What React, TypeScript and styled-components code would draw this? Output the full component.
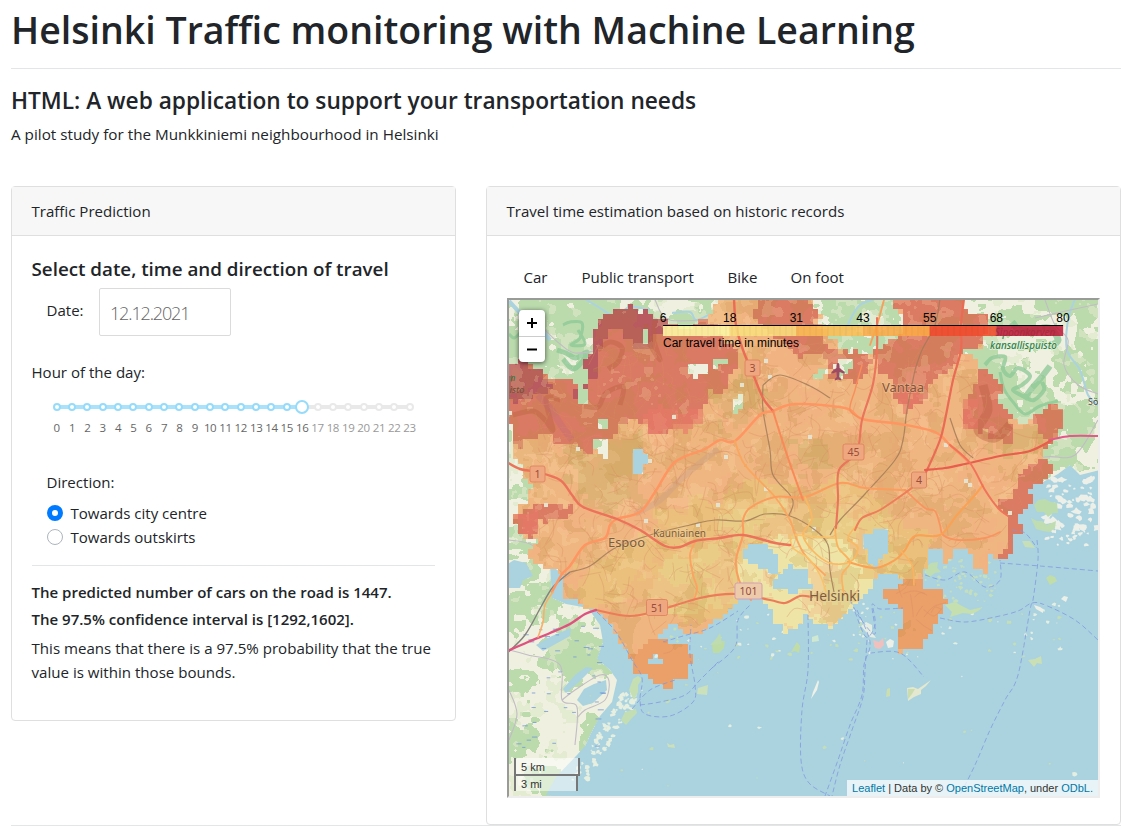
import React from "react";
import styled, { createGlobalStyle } from "styled-components";

const GlobalStyle = createGlobalStyle`
  * { box-sizing: border-box; }
  body { margin: 0; background: #fff; color: #212529; font-family: "Open Sans", "Noto Sans", sans-serif; font-size: 15.05px; overflow: hidden; }
  h1, h2, h3, p { margin: 0; }
`;

const Page = styled.main`
  padding: 6px 2px 0 11px;
  height: 826px;
  overflow: hidden;
`;
const Title = styled.h1`
  font-size: 37.5px;
  line-height: 48px;
  font-weight: 600;
  white-space: nowrap;
`;
const Rule = styled.hr<{ $top?: number; $bottom?: number }>`
  border: 0;
  height: 1px;
  background: #e4e5e6;
  margin: ${(p) => p.$top ?? 0}px 0 ${(p) => p.$bottom ?? 0}px;
`;
const Subtitle = styled.h2`
  font-size: 22.7px;
  line-height: 29px;
  font-weight: 600;
  white-space: nowrap;
`;
const Lead = styled.p`
  margin: 7px 0 40px;
  line-height: 24px;
  font-size: 15.25px;
`;
const Columns = styled.div`
  display: flex;
  gap: 30px;
  align-items: flex-start;
`;
const Card = styled.section<{ $width: number; $height: number }>`
  width: ${(p) => p.$width}px;
  height: ${(p) => p.$height}px;
  border: 1px solid #dfdfdf;
  border-radius: 4px;
`;
const CardHeader = styled.header`
  height: 49px;
  padding: 0 19.5px;
  line-height: 49px;
  background: #f7f7f7;
  border-bottom: 1px solid #dfdfdf;
`;
const PredictionBody = styled.div`
  padding: 21px 20px 21px 19.5px;
`;
const FormTitle = styled.h3`
  font-size: 18.8px;
  font-weight: 600;
  line-height: 24px;
  white-space: nowrap;
`;
const DateRow = styled.div`
  display: flex;
  height: 48px;
  margin-top: 7px;
  padding-left: 15px;
`;
const DateLabel = styled.label`
  width: 52.5px;
  line-height: 45px;
`;
const DateInput = styled.div`
  width: 132px;
  height: 48px;
  border: 1px solid #dbdbdb;
  border-radius: 2px;
  padding: 0 10px;
  font-size: 18px;
  font-weight: 300;
  line-height: 48px;
  color: #646464;
  letter-spacing: -1.15px;
`;
const HourLabel = styled.p`
  margin-top: 24px;
  line-height: 24px;
`;
const Slider = styled.div`
  display: grid;
  grid-template-columns: repeat(24, 15.35px);
  margin: 15px 0 0 17.5px;
`;
const Stop = styled.div<{ $on: boolean; $line: "on" | "off" | "none" }>`
  display: flex;
  flex-direction: column;
  align-items: center;
  position: relative;
  color: ${(p) => (p.$on ? "#666" : "#999")};
  &::before {
    content: "";
    position: absolute;
    display: ${(p) => (p.$line === "none" ? "none" : "block")};
    top: 6px;
    left: 50%;
    width: 100%;
    height: 4px;
    background: ${(p) => (p.$line === "on" ? "#abe2fb" : "#e9e9e9")};
  }
`;
const DotBox = styled.div`
  height: 16px;
  display: flex;
  align-items: center;
  z-index: 1;
`;
const Dot = styled.span<{ $on: boolean; $handle: boolean }>`
  width: ${(p) => (p.$handle ? 14 : 8)}px;
  height: ${(p) => (p.$handle ? 14 : 8)}px;
  border-radius: 50%;
  border: 2px solid ${(p) => (p.$on ? "#96dbfa" : "#e9e9e9")};
  background: #fff;
`;
const Mark = styled.span`
  font-size: 11.5px;
  line-height: 18px;
  margin-top: 4px;
  letter-spacing: -0.35px;
`;
const DirectionLabel = styled.p`
  margin: 33px 0 7px 15px;
  line-height: 24px;
`;
const RadioRow = styled.label`
  display: flex;
  align-items: center;
  gap: 8px;
  height: 24px;
  padding-left: 15px;
`;
const RadioMark = styled.span<{ $checked?: boolean }>`
  width: 16px;
  height: 16px;
  border-radius: 50%;
  border: ${(p) => (p.$checked ? "5px solid #007bff" : "1px solid #adb5bd")};
  background: #fff;
`;
const ResultLine = styled.p`
  font-weight: 600;
  font-size: 15.02px;
  line-height: 19px;
  margin-bottom: 8px;
  white-space: nowrap;
`;
const Explanation = styled.p`
  line-height: 24px;
  margin-top: -1px;
  font-size: 15.1px;
  white-space: nowrap;
`;
const MapBody = styled.div`
  padding: 29px 20px 0;
`;
const Tabs = styled.nav`
  display: flex;
  gap: 34px;
  padding-left: 16.5px;
  height: 33px;
  line-height: 24px;
`;
const Tab = styled.span<{ $width: number }>`
  width: ${(p) => p.$width}px;
  white-space: nowrap;
`;
const MapFrame = styled.div`
  position: relative;
  width: 593px;
  height: 500px;
  border: 2px solid;
  border-color: #999b99 #ededed #ededed #999b99;
  overflow: hidden;
  font-family: "Liberation Sans", Arial, sans-serif;
`;
const MapSvg = styled.svg`
  display: block;
`;
const ZoomControl = styled.div`
  position: absolute;
  top: 10px;
  left: 10px;
  width: 26px;
  border-radius: 4px;
  background: #fff;
  box-shadow: 0 1px 5px rgba(0, 0, 0, 0.65);
`;
const ZoomButton = styled.div`
  height: 26px;
  display: flex;
  align-items: center;
  justify-content: center;
  & + & { border-top: 1px solid #ccc; }
`;
const Scale = styled.div`
  position: absolute;
  left: 5px;
  bottom: 5px;
`;
const ScaleLine = styled.div<{ $width: number; $below?: boolean }>`
  width: ${(p) => p.$width}px;
  line-height: ${(p) => (p.$below ? 17 : 19)}px;
  padding-left: 5px;
  font-size: 11px;
  color: #333;
  border: 2px solid #777;
  border-top: ${(p) => (p.$below ? "2px solid #777" : "none")};
  border-bottom: ${(p) => (p.$below ? "none" : "2px solid #777")};
  margin-top: ${(p) => (p.$below ? -2 : 0)}px;
  height: ${(p) => (p.$below ? 17 : 18)}px;
  background: rgba(255, 255, 255, 0.5);
`;
const Attribution = styled.div`
  position: absolute;
  right: 0;
  bottom: 0;
  height: 16px;
  line-height: 16px;
  padding: 0 5px;
  font-size: 11px;
  color: #333;
  background: rgba(255, 255, 255, 0.72);
  white-space: nowrap;
`;
const MapLink = styled.span`
  color: #0078a8;
`;

type Pt = [number, number];
const parse = (s: string): Pt[] => s.trim().split(/\s+/).map((p) => p.split(",").map(Number) as Pt);
const inside = (x: number, y: number, poly: Pt[]) => {
  let hit = false;
  for (let i = 0, j = poly.length - 1; i < poly.length; j = i++) {
    const [xi, yi] = poly[i];
    const [xj, yj] = poly[j];
    if (yi > y !== yj > y && x < ((xj - xi) * (y - yi)) / (yj - yi) + xi) hit = !hit;
  }
  return hit;
};
const hash = (x: number, y: number, seed: number) => {
  const v = Math.sin(x * 127.1 + y * 311.7 + seed * 74.7) * 43758.5453;
  return v - Math.floor(v);
};
const noise = (x: number, y: number, seed: number) => {
  const xi = Math.floor(x), yi = Math.floor(y);
  const fx = x - xi, fy = y - yi;
  const u = fx * fx * (3 - 2 * fx), v = fy * fy * (3 - 2 * fy);
  const a = hash(xi, yi, seed), b = hash(xi + 1, yi, seed);
  const c = hash(xi, yi + 1, seed), d = hash(xi + 1, yi + 1, seed);
  return a + (b - a) * u + (c - a) * v + (a - b - c + d) * u * v;
};
// Merges matching cells of every row into one run.
const cells = (step: number, test: (x: number, y: number) => boolean) => {
  let d = "";
  for (let y = 299; y < 797; y += step) {
    let start = -1;
    for (let x = 508; x < 1100 + step; x += step) {
      const on = x < 1100 && test(x + step / 2, y + step / 2);
      if (on && start < 0) start = x;
      if (!on && start >= 0) {
        d += `M${start} ${y}H${x}v${step}H${start}z`;
        start = -1;
      }
    }
  }
  return d;
};
const grid = (polys: Pt[][], holes: Pt[][] = [], rough = 5) =>
  cells(5, (x, y) => {
    const px = x + (noise(x / 9, y / 9, 5) - 0.5) * rough * 2;
    const py = y + (noise(x / 9, y / 9, 8) - 0.5) * rough * 2;
    return polys.some((p) => inside(px, py, p)) && !holes.some((p) => inside(x, y, p));
  });

const AREA = parse(`505,362 528,363 538,370 550,376 565,380 578,388 590,383 587,365 590,350 592,335 597,320 605,314 625,308 645,310 660,318 672,328 690,330 702,322 715,312 722,295 808,295 822,318 828,332 838,348 850,353 870,352 890,342 905,331 898,318 890,295 962,295 965,312 990,313 985,347 962,350 975,362 988,370 1003,383 995,398 1010,412 1023,424 1045,410 1062,403 1062,420 1058,440 1046,450 1052,470 1045,482 1030,485 1027,494 1037,497 1020,510 1012,516 1025,525 1010,540 1014,552 1008,563 998,556 987,552 990,572 973,564 970,553 955,548 945,564 940,558 948,546 930,552 924,565 924,592 900,575 885,572 872,590 864,598 850,604 845,615 830,628 818,622 804,612 800,631 784,630 776,616 765,602 752,598 735,606 720,618 710,624 700,630 684,633 670,624 655,638 668,643 680,642 692,657 687,673 667,690 647,677 635,672 634,660 625,648 608,622 597,611 580,607 567,597 561,580 553,572 541,567 530,556 536,542 521,537 512,523 518,508 528,504 527,480 514,455 512,423 505,402`);
const ISLAND = parse(`881,580 900,586 908,580 925,580 925,589 943,590 948,604 937,622 932,634 925,646 897,649 897,632 905,622 900,608 885,608`);
const HOLES = [
  parse(`743,548 757,542 770,548 781,560 776,573 760,569 745,560`),
  parse(`774,578 790,565 808,570 811,589 790,593 774,587`),
  parse(`865,535 875,529 889,532 885,555 875,568 866,562`),
  parse(`869,582 888,577 892,588 875,596`),
  parse(`632,453 643,448 647,461 638,476 632,475`),
  parse(`590,440 607,437 609,461 598,455`),
  parse(`685,368 697,363 706,364 706,373 692,378`),
  parse(`714,360 727,357 727,364 714,367`),
  parse(`648,658 657,655 663,659 661,664 648,663`),
  parse(`732,398 741,395 742,411 733,412`),
  parse(`835,362 846,357 857,365 846,375 836,378`),
  parse(`812,375 825,367 828,373 818,382`),
  parse(`580,390 588,390 588,403 579,405`),
  parse(`600,417 606,417 606,429 600,429`),
  parse(`645,327 650,327 650,344 645,344`),
];
const RED = [
  parse(`500,355 580,378 592,300 670,310 700,326 714,318 720,338 734,349 738,370 729,385 712,397 704,408 692,423 678,418 668,428 652,435 642,433 644,422 620,423 618,436 602,445 580,451 564,440 541,436 524,444 505,452`),
  parse(`755,295 810,295 826,340 835,354 800,355 777,345 765,330 757,317`),
  parse(`870,350 905,330 890,295 967,295 966,312 992,312 985,347 962,350 950,372 937,372 930,395 917,405 897,398 890,375 875,367`),
  parse(`976,358 1005,380 998,400 1015,425 1008,440 992,443 983,432 967,435 960,420 970,401 974,383`),
  parse(`1030,415 1065,401 1064,440 1046,450 1040,438`),
  parse(`1030,462 1056,460 1049,481 1028,488 1039,499 1018,515 1026,529 1012,540 1015,554 1008,566 1000,555 1010,535 1006,519 996,507 1010,493 1018,477`),
  parse(`512,528 521,508 535,504 550,505 571,503 571,515 550,520 541,527 529,540 516,536`),
  parse(`825,350 867,352 870,378 845,382 830,371`),
];
const DARK = [
  parse(`592,325 604,312 645,306 665,318 672,329 654,334 653,349 638,349 625,331 612,331 600,350 597,375 580,380 584,362`),
  parse(`500,358 535,366 550,380 547,396 522,402 505,397`),
  parse(`564,375 586,381 589,400 577,397`),
];
const OCHRE = [parse(`560,440 590,455 620,440 640,440 640,500 610,510 580,495 565,470`), parse(`735,385 758,378 757,400 735,425 722,418 715,400`), parse(`800,440 832,436 838,462 800,468`), parse(`985,430 1040,420 1042,450 1000,455 980,445`)];
const WARM_YELLOW = [parse(`570,600 585,560 610,555 640,535 660,515 690,500 730,495 750,480 800,490 840,475 880,500 900,520 935,545 920,590 880,590 830,630 780,635 720,620 670,612 620,600 600,612`)];
const YELLOW = [parse(`650,580 670,560 700,548 722,536 730,515 750,503 795,505 840,500 860,518 875,515 905,560 910,580 860,610 830,632 780,635 765,602 720,610 695,604 670,612 650,600`)];
const CORE = [parse(`735,560 780,540 830,540 855,548 862,570 880,590 860,605 830,632 780,635 764,604 748,591`)];
const SEA = parse(`1100,470 1080,475 1070,465 1058,474 1043,482 1020,478 990,530 950,530 850,560 780,580 700,600 630,620 550,565 552,598 566,604 588,608 600,625 603,642 597,659 610,670 617,680 612,702 600,716 590,735 581,756 575,774 560,800 1100,800`);
const W_LAKES = [
  parse(`505,566 514,560 526,563 533,576 523,580 520,588 505,588`),
  parse(`536,645 552,636 571,628 570,636 543,651`),
  parse(`563,689 575,675 586,667 593,668 579,682 566,693`),
  parse(`577,700 584,689 594,684 606,680 607,690 593,703 583,706`),
  parse(`546,795 556,777 577,755 595,735 602,742 574,786 564,798`),
];

const areaD = grid([AREA, ISLAND], HOLES, 4);
const inArea = (x: number, y: number) => (inside(x, y, AREA) || inside(x, y, ISLAND)) && !HOLES.some((h) => inside(x, y, h));
const redD = grid(RED, [], 6);
const darkD = grid(DARK, [], 6);
const ochreD = grid(OCHRE, [], 12);
const warmD = grid(WARM_YELLOW, [], 10);
const yellowD = grid(YELLOW, [], 9);
const coreD = grid(CORE, [], 8);
const forestD = cells(1, (x, y) => !inside(x, y, SEA) && noise(x / 19, y / 19, 3) + noise(x / 6, y / 6, 4) * 0.5 + noise(x / 2.5, y / 2.5, 6) * 0.12 > (x > 620 && y < 480 ? 0.7 : y < 400 ? 0.5 : 0.87));
const paleD = cells(1, (x, y) => !inside(x, y, SEA) && noise(x / 12, y / 12, 13) + noise(x / 4, y / 4, 14) * 0.5 > 0.98);
const mottledD = cells(1, (x, y) => inArea(x, y) && noise(x / 17, y / 17, 21) + noise(x / 5, y / 5, 22) * 0.45 > (y < 470 ? 0.78 : 0.88));
const rosyD = cells(3, (x, y) => inArea(x, y) && noise(x / 22, y / 22, 31) + noise(x / 5, y / 5, 32) * 0.4 > 0.85);

const curve = (s: string) => {
  const p = parse(s);
  let d = `M${p[0]}`;
  for (let i = 0; i < p.length - 1; i++) {
    const a = p[i - 1] ?? p[i], b = p[i], c = p[i + 1], e = p[i + 2] ?? c;
    d += `C${b[0] + (c[0] - a[0]) / 6},${b[1] + (c[1] - a[1]) / 6} ${c[0] - (e[0] - b[0]) / 6},${c[1] - (e[1] - b[1]) / 6} ${c[0]},${c[1]}`;
  }
  return d;
};

const ROADS: { pts: string; c: string; w: number }[] = [
  { pts: `552,592 562,574 570,566 585,545 605,538 610,525 617,519 640,512 655,492 675,462 705,449 720,440 735,441 760,415 773,411 795,404 845,408 862,419 900,424 935,432 950,445 970,463`, c: "#ff9561", w: 2.4 },
  { pts: `862,419 850,410 855,390 862,365`, c: "#f88f5b", w: 1.4 },
  { pts: `735,441 745,465 775,497 790,520 795,535 805,555 825,575`, c: "#fba65f", w: 1.8 },
  { pts: `751,600 739,580 736,560 743,535 743,520 750,508 775,497 805,497 840,483 865,488 905,490`, c: "#fb9d5e", w: 2 },
  { pts: `905,490 925,508 935,511 940,525 943,535 958,540 985,538 1000,532`, c: "#f9945f", w: 1.8 },
  { pts: `848,562 875,568 895,560 905,550 915,536 940,535 957,515 975,495 983,485`, c: "#fba154", w: 2 },
  { pts: `695,542 690,555 693,575 697,588 694,600`, c: "#fda262", w: 1.8 },
  { pts: `805,497 812,519 803,534 812,550 830,563 850,562 858,548 848,538 858,524`, c: "#fbb862", w: 1.7 },
  { pts: `835,528 838,547 850,562 842,575 844,595`, c: "#fbb25f", w: 1.8 },
  { pts: `790,535 793,548 808,558 820,575 826,592`, c: "#fac169", w: 1.5 },
  { pts: `795,535 835,538`, c: "#fac169", w: 1.5 },
  { pts: `900,550 912,565 914,585`, c: "#fbb261", w: 1.5 },
  { pts: `870,345 877,325 884,300`, c: "#f99f5c", w: 1.8 },
  { pts: `734,299 736,325 743,350 753,374 763,398 773,411`, c: "#ec6b55", w: 2.4 },
  { pts: `773,411 787,455 803,500`, c: "#f98a58", w: 2 },
  { pts: `877,318 877,350 873,384 862,420 857,452 839,470 838,500 836,528`, c: "#ea755a", w: 2.1 },
  { pts: `964,299 961,325 961,350 953,380 945,420 940,440 928,468 922,480`, c: "#ea6b54", w: 2.2 },
  { pts: `922,480 905,493 880,510 862,518 855,530`, c: "#ee7d59", w: 2 },
  { pts: `925,470 945,468 965,464 1000,456 1030,451 1052,440`, c: "#e85d4b", w: 2.2 },
  { pts: `1050,440 1070,436 1100,436`, c: "#e4588a", w: 2 },
  { pts: `505,461 520,469 537,472 560,480 572,495 583,507 617,519 640,530 665,546 680,547 695,541 720,538 743,535 775,543 790,545`, c: "#ec735a", w: 2.4 },
  { pts: `950,445 970,463 985,490 998,508 1008,516`, c: "#f0735a", w: 2 },
  { pts: `596,610 630,616 660,610 700,598 735,594 770,600 785,603 800,596 812,597`, c: "#ec7c59", w: 2.2 },
  { pts: `505,652 528,642 550,633 570,624 585,614 596,610`, c: "#df527f", w: 2.4 },
  { pts: `553,592 545,605 543,622 538,637`, c: "#f7b06c", w: 1.6 },
];
const RAILS = [
  `570,572 590,566 615,548 650,535 690,525 715,520 745,521 765,514 790,516 815,530 828,545 830,570 834,592`,
  `763,385 763,410 770,450 773,475 790,495 793,505 788,517`,
  `915,370 907,410 903,440 895,460 865,494 840,520 830,535`,
  `940,299 935,325 922,350 915,370`,
  `763,385 780,375 810,386 830,398`,
  `950,418 960,445 973,458`,
];
const MINOR: string[] = [];
for (let i = 0; i < 620; i++) {
  const x = 530 + hash(i, 1, 41) * 510, y = 345 + hash(i, 2, 41) * 300;
  if (!inArea(x, y)) continue;
  const a = hash(i, 3, 41) * 6.3, l = 6 + hash(i, 4, 41) * 12;
  const x2 = x + Math.cos(a) * l, y2 = y + Math.sin(a) * l;
  const b = a + 0.9 * (hash(i, 5, 41) - 0.5) * 3;
  const x3 = x2 + Math.cos(b) * l, y3 = y2 + Math.sin(b) * l;
  if (inArea(x2, y2) && inArea(x3, y3)) MINOR.push(curve(`${x},${y} ${x2},${y2} ${x3},${y3}`));
}
const FERRIES = [
  `808,615 808,670 802,710 801,760 809,783 830,796`,
  `857,610 870,642 864,665 862,695 850,725 838,760 825,796`,
  `867,640 865,670 863,697 852,730 840,765 832,796`,
  `870,653 900,653 924,677`,
  `1037,540 1038,560 1033,600 1030,610 1018,675 1005,700 990,730 975,765 960,795`,
  `940,618 965,622 995,617 1018,611 1032,603 1045,605 1075,620 1098,640`,
  `1000,563 1040,566 1098,571`,
  `925,575 945,580 965,572 985,587 1000,580 1000,560`,
  `1012,530 1025,533 1037,548`,
  `850,600 860,618 875,634 872,605 880,609 903,608`,
  `873,608 875,625 866,637 855,612`,
  `712,668 735,647 738,620 751,604`,
  `597,612 616,632 632,660 642,678 640,700 645,714 670,716 693,702 695,685 690,655 691,625`,
  `640,705 660,702 685,695 700,680 720,660`,
  `632,709 650,690 675,680`,
  `663,642 683,636 710,628 738,611`,
];
const specks: { x: number; y: number; r: number; c: string }[] = [];
for (let i = 0; i < 230; i++) {
  const near = i < 145;
  const x = near ? 625 + hash(i, 7, 2) * 440 : 570 + hash(i, 8, 2) * 520;
  const y = near ? 600 + hash(i, 9, 2) * 60 : 640 + hash(i, 10, 2) * 150;
  if (inArea(x, y) || (!near && hash(i, 12, 2) > 0.35)) continue;
  specks.push({ x, y, r: 0.5 + hash(i, 11, 2) * 1.3, c: hash(i, 13, 2) > 0.6 ? "#c4deb5" : "#e5eee2" });
}
for (let i = 0; i < 75; i++) {
  const x = 1046 + hash(i, 21, 2) * 52, y = 475 + hash(i, 22, 2) * 70;
  specks.push({ x, y, r: 0.8 + hash(i, 23, 2) * 2.8 * (y < 530 ? 1 : 0.4), c: "#edf0e8" });
}
for (let i = 0; i < 70; i++) {
  const t = hash(i, 24, 2);
  specks.push({ x: 622 - t * 52 + hash(i, 25, 2) * 20, y: 690 + t * 90, r: 0.6 + hash(i, 26, 2) * 1.9, c: "#e6efe0" });
}
for (let i = 0; i < 55; i++) {
  specks.push({ x: 925 + hash(i, 27, 2) * 72, y: 560 + hash(i, 28, 2) * 42, r: 0.6 + hash(i, 29, 2) * 1.4, c: "#c4dfbd" });
}
const blob = (x: number, y: number, r: number, i: number) => {
  let d = "";
  for (let k = 0; k < 8; k++) {
    const a = (k / 8) * Math.PI * 2, q = r * (0.55 + hash(i, k, 77) * 0.9);
    d += `${k ? "L" : "M"}${(x + Math.cos(a) * q * 1.25).toFixed(1)} ${(y + Math.sin(a) * q).toFixed(1)}`;
  }
  return d + "z";
};
const ISLES: { s: string; c: string }[] = [
  { s: `1034,505 1038,500 1045,499 1051,502 1057,503 1058,513 1053,513 1048,517 1044,512 1037,512`, c: "#bddcae" },
  { s: `1031,518 1037,521 1042,521 1047,525 1056,521 1055,528 1050,532 1043,531 1036,529`, c: "#c0ddb1" },
  { s: `1022,541 1030,541 1035,548 1025,547`, c: "#c6dfb8" },
  { s: `945,605 955,602 962,606 970,610 983,607 978,611 972,614 963,613 950,617 952,612`, c: "#c6dfae" },
  { s: `925,568 931,563 938,562 937,568 941,572 935,573 928,578`, c: "#bfddb0" },
  { s: `629,690 633,679 638,676 642,679 638,685 638,692 634,700`, c: "#c5dfb3" },
  { s: `621,720 625,712 636,709 637,713 632,718 626,725`, c: "#c3deb2" },
  { s: `712,645 717,641 725,641 724,648 719,653 713,653`, c: "#bcdba5" },
  { s: `791,652 797,642 800,646 799,653 795,651`, c: "#c1dda5" },
  { s: `907,688 913,687 918,689 931,680 926,686 921,690 921,694 914,697 908,701`, c: "#e3e8cf" },
  { s: `908,689 915,689 912,694 908,699`, c: "#cbdcae" },
  { s: `887,689 890,688 890,696 886,697`, c: "#cbdfae" },
  { s: `813,692 818,680 819,682 817,690 811,699`, c: "#eef1e8" },
  { s: `1028,660 1035,659 1041,656 1042,664 1037,663 1034,667`, c: "#cbdfb4" },
  { s: `1034,605 1040,607 1043,609 1043,613 1036,609`, c: "#eef0e8" },
  { s: `1061,599 1064,596 1068,597 1066,602`, c: "#edf0e7" },
  { s: `1046,578 1050,575 1055,577 1057,581 1050,585`, c: "#c1dda8" },
  { s: `886,642 890,639 894,641 893,647 888,648`, c: "#edf0e8" },
  { s: `873,640 879,642 883,638 884,645 880,649 875,648`, c: "#efc0bd" },
  { s: `861,626 866,622 872,625 872,632 876,638 870,637 866,632`, c: "#e6eee4" },
  { s: `698,688 708,685 707,695 697,694`, c: "#cbe1bb" },
  { s: `710,645 716,639 720,633 722,644`, c: "#bfdcb0" },
  { s: `667,743 670,745 674,744 675,748 668,747`, c: "#cce1ba" },
  { s: `812,637 818,635 819,641 812,642`, c: "#cfe8d1" },
];
const SHIELDS: { x: number; y: number; t: string; pink?: boolean }[] = [
  { x: 537.5, y: 474, t: "1" },
  { x: 752.5, y: 368, t: "3" },
  { x: 853.5, y: 452, t: "45" },
  { x: 919, y: 480, t: "4" },
  { x: 657, y: 607.5, t: "51" },
  { x: 748.5, y: 591, t: "101", pink: true },
];
const LEGEND = ["#fdf8a5", "#f9df7e", "#fbbd55", "#fba847", "#f04a2c", "#bd1c3b"];
const TICKS = ["6", "18", "31", "43", "55", "68", "80"];

const poly = (p: Pt[]) => p.map((q) => q.join(",")).join(" ");

function TravelMap() {
  return (
    <MapSvg width={589} height={496} viewBox="509 300 589 496">
      <defs>
        <clipPath id="travel-area"><path d={areaD} /></clipPath>
      </defs>
      <rect x={505} y={295} width={600} height={505} fill="#eff0df" />
      <path d={forestD} fill="#bbdbad" />
      <path d={paleD} fill="#dbe8c7" opacity={0.65} />
      <g fill="none" stroke="#8cc795" strokeWidth={3} opacity={0.75} strokeLinejoin="round">
        <path d={curve(`563,325 570,322 582,323 580,338 571,345 585,344 578,330`)} />
        <path d={curve(`557,350 566,353 576,358 587,352 582,362 573,369 563,359`)} strokeWidth={5} />
        <path d={curve(`985,365 992,358 1005,357 1003,369 1010,376 1018,368 1030,376 1022,385 1013,390 1025,397 1034,400 1044,390 1042,382`)} strokeWidth={4} />
        <path d={curve(`1050,366 1040,379 1032,388 1024,399`)} strokeWidth={6} />
        <path d={curve(`1000,372 1004,389 1013,402 1025,414 1040,406 1058,401`)} />
        <path d={curve(`1012,322 1018,329 1030,332 1043,328 1051,329 1058,340 1049,347`)} strokeWidth={7} />
        <path d={curve(`509,334 514,338 520,333`)} />
      </g>
      <g fill="none" stroke="#abd3df" strokeWidth={2}>
        <path d={curve(`585,299 600,308 615,316 630,307 650,310`)} />
        <path d={curve(`672,313 690,312 696,320 710,314`)} />
        <path d={curve(`845,335 850,320 860,305 875,299`)} />
        <path d={curve(`1075,299 1068,320 1067,350 1080,370 1088,395 1098,405`)} />
        <path d={curve(`509,301 525,318 540,329 550,340`)} strokeWidth={4} />
      </g>
      <g fill="none" stroke="#c2bcc5" strokeWidth={1.1}>
        <path d={curve(`545,330 560,344 575,353 600,350`)} />
        <path d={curve(`655,300 670,320 720,318`)} />
        <path d={curve(`1045,300 1055,325 1068,340 1064,365 1078,385 1098,394`)} />
        <path d={curve(`1035,318 1070,310 1098,304`)} />
        <path d={curve(`1000,467 1045,457 1075,455 1098,420`)} />
        <path d={curve(`509,650 528,655 560,665 562,700 577,707 575,745`)} />
        <path d={curve(`562,700 575,690 600,675 609,681 605,700 585,710 577,718`)} />
        <path d={curve(`509,690 517,714 509,740`)} />
        <path d={curve(`509,540 530,544 552,560`)} />
      </g>
      <polygon points={poly(SEA)} fill="#aad3df" />
      {W_LAKES.map((l, i) => <polygon key={i} points={poly(l)} fill="#aad3df" />)}
      {HOLES.slice(0, 5).map((l, i) => <polygon key={i} points={poly(l)} fill="#aad3df" stroke="#aad3df" strokeWidth={4} />)}
      {specks.map((s, i) => <path key={i} d={blob(s.x, s.y, s.r, i)} fill={s.c} />)}
      {ISLES.map((s, i) => <polygon key={i} points={s.s} fill={s.c} />)}
      <g fill="none" stroke="#7297d8" strokeWidth={0.8}>
        {Array.from({ length: 42 }, (_, i) => {
          const x = 515 + hash(i, 1, 91) * 90, y = 625 + hash(i, 2, 91) * 125;
          return <path key={i} d={`M${x} ${y}h${3 + hash(i, 3, 91) * 3}`} />;
        })}
      </g>
      <path d={areaD} fill="#efb681" />
      <g clipPath="url(#travel-area)">
        <path d={ochreD} fill="#deb274" />
        <path d={warmD} fill="#eac07c" />
        <path d={yellowD} fill="#e9cd86" />
        <path d={coreD} fill="#ede4a5" />
        <path d={rosyD} fill="#f6ad80" opacity={0.3} />
        <path d={grid([parse(`630,655 640,648 650,640 700,640 700,690 640,690`), ISLAND], [], 2)} fill="#eb9f69" />
        <path d={redD} fill="#db7b64" />
        <path d={darkD} fill="#b85a60" />
        <path d={mottledD} fill="#b88d3e" opacity={0.18} />
        <path d={paleD} fill="#ffe0ad" opacity={0.2} />
        <g fill="none" stroke="#b85f3f" strokeWidth={5} opacity={0.4} strokeLinejoin="round">
          <path d={curve(`598,350 610,342 622,348 618,362 608,369`)} />
          <path d={curve(`655,320 654,340 660,360 648,340 646,324`)} />
          <path d={curve(`513,415 533,411 545,420 553,430 546,399 560,400`)} />
          <path d={curve(`584,406 598,407 606,393 623,387 620,405`)} />
          <path d={curve(`983,385 988,410 978,430 995,438 1010,425`)} strokeWidth={9} />
        </g>
        <path d={curve(`538,395 550,408 561,425 572,440`)} stroke="#c4687b" strokeWidth={7} opacity={0.35} fill="none" />
        <path d={curve(`718,449 700,463 680,480 660,500 635,514`)} stroke="#cda18a" strokeWidth={6} opacity={0.4} fill="none" />
        <g fill="#e97769" opacity={0.6}>
          <path d={grid([parse(`640,425 655,407 678,414 693,409 708,415 689,432 668,428 650,435`), parse(`896,398 914,387 920,405 906,413`), parse(`965,395 978,400 975,430 960,426`), parse(`515,515 540,507 542,524 526,536`)], [], 5)} />
        </g>
        {MINOR.map((d, i) => <path key={i} d={d} fill="none" stroke="#d98d62" strokeWidth={0.6} opacity={0.6} />)}
        <path d={cells(4, (x, y) => y > 355 && y < 530 && hash(Math.round(x), Math.round(y), 61) > 0.9975)} fill="#e5e3d0" />
      </g>
      <g fill="none">
        <path d={curve(`505,655 525,635 542,605 553,587 570,572`)} stroke="#85827e" strokeWidth={1.4} />
        {RAILS.map((r, i) => <path key={i} d={curve(r)} stroke="#a27b58" strokeWidth={1.2} opacity={0.85} />)}
        {ROADS.map((r, i) => <path key={i} d={curve(r.pts)} stroke={r.c} strokeWidth={r.w} strokeLinecap="round" />)}
        {FERRIES.map((r, i) => <path key={i} d={curve(r)} stroke="#7f97df" strokeWidth={0.9} strokeDasharray="5 3" opacity={0.85} />)}
      </g>
      <path d="M838 363c1.5 0 1.6 2 1.6 5l5 4v2l-5-2-.4 5 2 2v1.4l-3.2-1-3.2 1V379l2-2-.4-5-5 2v-2l5-4c0-3 .1-5 1.6-5z" fill="#9d4b62" />
      {SHIELDS.map((s) => {
        const w = s.t.length * 6 + 9;
        return (
          <g key={s.t}>
            <rect x={s.x - w / 2} y={s.y - 8} width={w} height={16} rx={2} fill={s.pink ? "#edcbaa" : "#efa77f"} stroke={s.pink ? "#d398b0" : "#df835e"} strokeWidth={0.9} />
            <text x={s.x} y={s.y + 4} textAnchor="middle" fontFamily="Noto Sans" fontSize={10.5} fill="#994d3c">{s.t}</text>
          </g>
        );
      })}
      <g fontFamily="Noto Sans" fill="#795d40" textAnchor="middle" stroke="#f5cf98" strokeWidth={1.5} strokeOpacity={0.5} paintOrder="stroke">
        <text x={626.5} y={546.5} fontSize={13}>Espoo</text>
        <text x={679.5} y={537} fontSize={10}>Kauniainen</text>
        <text x={834.5} y={600.5} fontSize={13.8}>Helsinki</text>
        <text x={903} y={392} fontSize={13} fill="#83533e">Vantaa</text>
      </g>
      <text x={1088.1} y={405} fontFamily="Noto Sans" fontSize={8.8} fill="#4b4c48">Sö</text>
      <g fontFamily="Noto Sans" fontSize={9.9} fontStyle="italic" fontWeight={500} fill="#307f49">
        <text x={1025} y={336} textAnchor="middle">Sipoonkorven</text>
        <text x={1023.5} y={349} textAnchor="middle" stroke="#e5f2dc" strokeWidth={1.3} paintOrder="stroke">kansallispuisto</text>
        <text x={510} y={381} fontSize={9}>n</text>
        <text x={509.5} y={393} fontSize={9} fill="#73543b">isto</text>
      </g>
      {LEGEND.map((c, i) => <rect key={c} x={663 + i * 66.67} y={325} width={66.8} height={11} fill={c} opacity={0.88} />)}
      {Array.from({ length: 66 }, (_, i) => <path key={i} d={`M${666 + i * 6} 326v10`} stroke="#754c23" strokeWidth={0.6} opacity={0.12} />)}
      <path d="M663 325.5h400" stroke="#000" strokeWidth={1} />
      <g fontFamily="Liberation Sans" fontSize={12} fill="#000">
        {TICKS.map((t, i) => <text key={t} x={663 + i * 66.67} y={322} textAnchor="middle">{t}</text>)}
        <text x={663} y={347}>Car travel time in minutes</text>
      </g>
    </MapSvg>
  );
}

export default function App() {
  return (
    <>
      <GlobalStyle />
      <Page>
        <Title>Helsinki Traffic monitoring with Machine Learning</Title>
        <Rule $top={14} $bottom={17} />
        <Subtitle>HTML: A web application to support your transportation needs</Subtitle>
        <Lead>A pilot study for the Munkkiniemi neighbourhood in Helsinki</Lead>
        <Columns>
          <Card $width={445} $height={535}>
            <CardHeader>Traffic Prediction</CardHeader>
            <PredictionBody>
              <FormTitle>Select date, time and direction of travel</FormTitle>
              <DateRow>
                <DateLabel>Date:</DateLabel>
                <DateInput>12.12.2021</DateInput>
              </DateRow>
              <HourLabel>Hour of the day:</HourLabel>
              <Slider>
                {Array.from({ length: 24 }, (_, i) => (
                  <Stop key={i} $on={i <= 16} $line={i === 23 ? "none" : i < 16 ? "on" : "off"}>
                    <DotBox><Dot $on={i <= 16} $handle={i === 16} /></DotBox>
                    <Mark>{i}</Mark>
                  </Stop>
                ))}
              </Slider>
              <DirectionLabel>Direction:</DirectionLabel>
              <RadioRow><RadioMark $checked />Towards city centre</RadioRow>
              <RadioRow><RadioMark />Towards outskirts</RadioRow>
              <Rule $top={16} $bottom={17} />
              <ResultLine>The predicted number of cars on the road is 1447.</ResultLine>
              <ResultLine>The 97.5% confidence interval is [1292,1602].</ResultLine>
              <Explanation>
                This means that there is a 97.5% probability that the true
                <br />
                value is within those bounds.
              </Explanation>
            </PredictionBody>
          </Card>
          <Card $width={635} $height={639}>
            <CardHeader>Travel time estimation based on historic records</CardHeader>
            <MapBody>
              <Tabs>
                <Tab $width={24}>Car</Tab>
                <Tab $width={112}>Public transport</Tab>
                <Tab $width={29}>Bike</Tab>
                <Tab $width={56}>On foot</Tab>
              </Tabs>
              <MapFrame>
                <TravelMap />
                <ZoomControl>
                  <ZoomButton><svg width="12" height="12"><path d="M1 6h10M6 1v10" stroke="#000" strokeWidth="2" /></svg></ZoomButton>
                  <ZoomButton><svg width="12" height="12"><path d="M1 5.5h10" stroke="#000" strokeWidth="2" /></svg></ZoomButton>
                </ZoomControl>
                <Scale>
                  <ScaleLine $width={66}>5 km</ScaleLine>
                  <ScaleLine $width={64} $below>3 mi</ScaleLine>
                </Scale>
                <Attribution>
                  <MapLink>Leaflet</MapLink> | Data by © <MapLink>OpenStreetMap</MapLink>, under <MapLink>ODbL.</MapLink>
                </Attribution>
              </MapFrame>
            </MapBody>
          </Card>
        </Columns>
        <Rule />
      </Page>
    </>
  );
}
